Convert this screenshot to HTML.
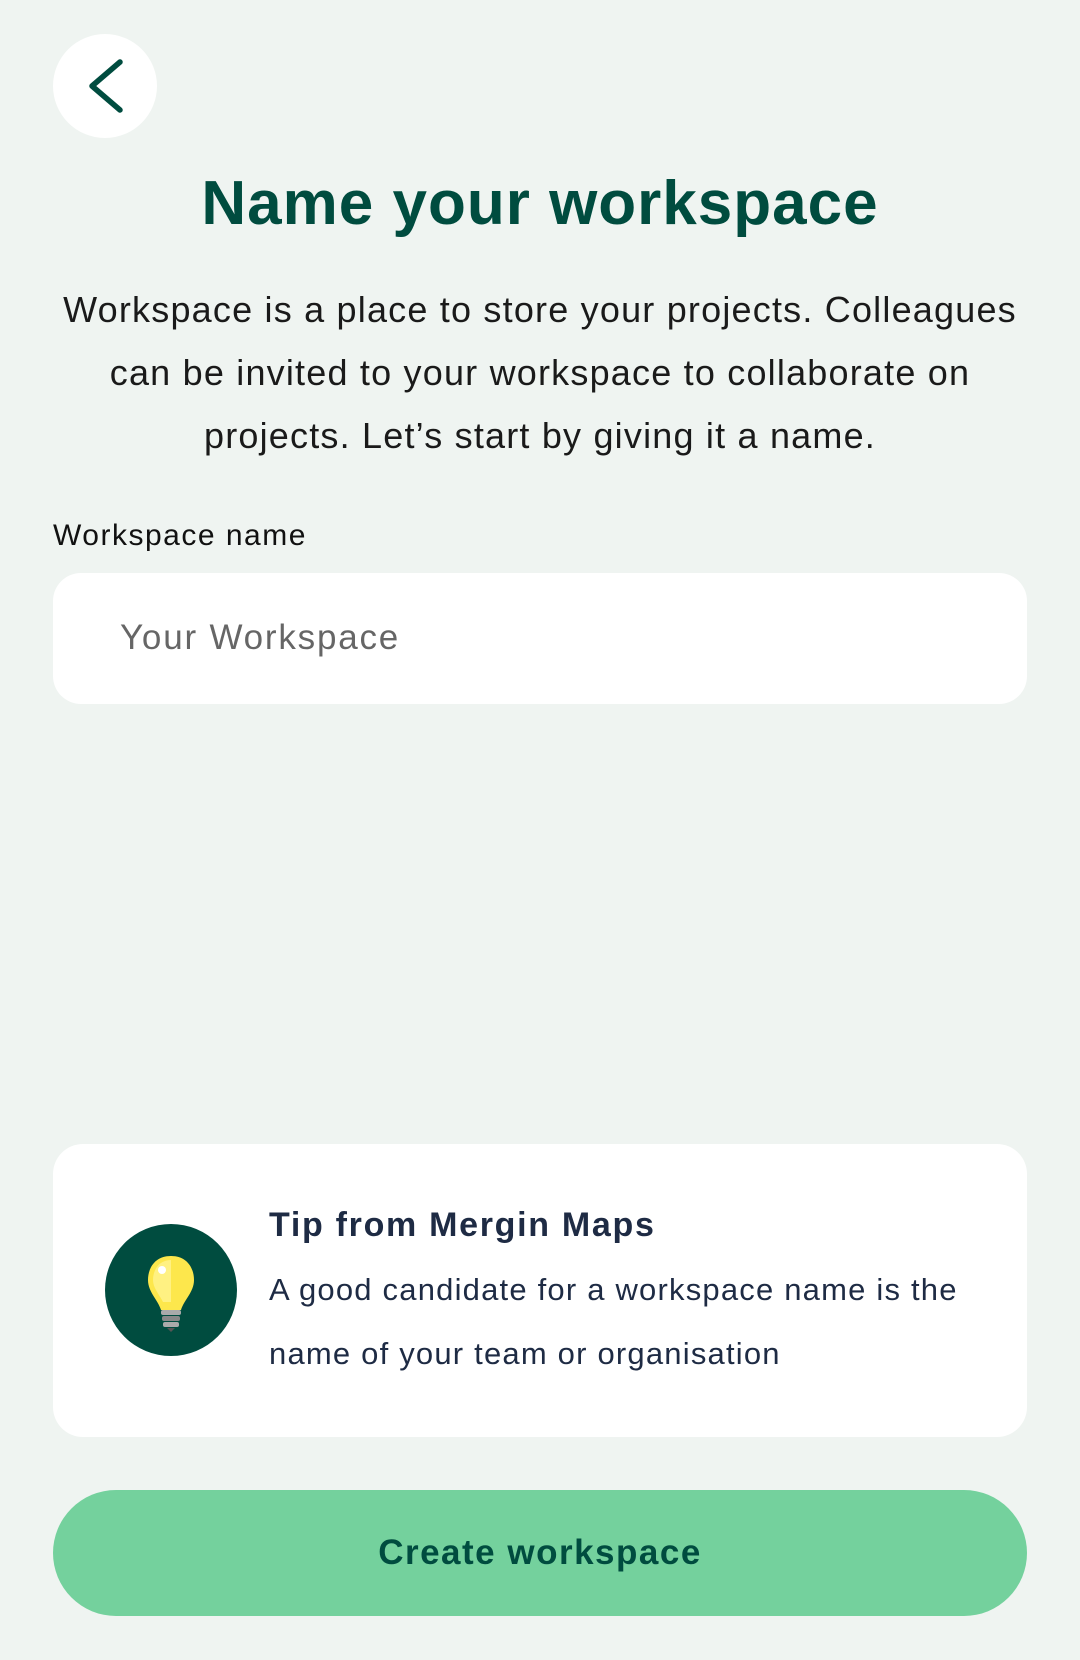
<!DOCTYPE html>
<html><head><meta charset="utf-8"><style>
*{margin:0;padding:0;box-sizing:border-box}
body{width:1080px;height:1660px;background:#eff4f1;font-family:"Liberation Sans",sans-serif;position:relative;overflow:hidden}
.back{position:absolute;left:53px;top:34px;width:104px;height:104px;border-radius:50%;background:#fff}
h1{position:absolute;top:166px;left:0;width:1080px;text-align:center;font-size:62px;font-weight:bold;color:#004c3f;line-height:76px;letter-spacing:1px}
.p{position:absolute;top:278px;left:0;width:1080px;text-align:center;font-size:36px;line-height:63px;color:#1a1a1a;letter-spacing:1.2px}
.lbl{position:absolute;left:53px;top:519px;font-size:30px;color:#111;letter-spacing:1.5px}
.inp{position:absolute;left:53px;top:573px;width:974px;height:131px;background:#fff;border-radius:28px}
.inp span{position:absolute;left:67px;top:44px;font-size:35px;color:#666;line-height:42px;letter-spacing:1.8px}
.card{position:absolute;left:53px;top:1144px;width:974px;height:293px;background:#fff;border-radius:30px}
.bulb{position:absolute;left:105px;top:1224px;width:132px;height:132px;border-radius:50%;background:#004c3f}
.tt{position:absolute;left:269px;top:1206px;font-size:34px;font-weight:bold;color:#1e2b44;letter-spacing:1.7px}
.tb{position:absolute;left:269px;top:1258px;font-size:31px;line-height:64px;color:#1e2b44;width:780px;letter-spacing:1.2px}
.btn{position:absolute;left:53px;top:1490px;width:974px;height:126px;border-radius:63px;background:#74d19d;text-align:center;line-height:126px;font-size:35px;font-weight:bold;color:#004c3f;letter-spacing:1.5px}
</style></head><body>
<div class="back"><svg width="104" height="104" viewBox="0 0 104 104"><path d="M67 28 L39 52 L67 76" fill="none" stroke="#004c3f" stroke-width="5.5" stroke-linecap="round" stroke-linejoin="round"/></svg></div>
<h1>Name your workspace</h1>
<div class="p">Workspace is a place to store your projects. Colleagues<br>can be invited to your workspace to collaborate on<br>projects. Let’s start by giving it a name.</div>
<div class="lbl">Workspace name</div>
<div class="inp"><span>Your Workspace</span></div>
<div class="card"></div>
<div class="bulb"><svg width="132" height="132" viewBox="0 0 132 132">
<path d="M66 32 C50 32 43 44 43 56 C43 68 53 76 56 86 L76 86 C79 76 89 68 89 56 C89 44 82 32 66 32 Z" fill="#fde74c"/>
<path d="M66 36 C54 36 48 46 48 56 C48 64 54 70 58 78 L66 78 Z" fill="#fff59a" opacity=".7"/>
<circle cx="57" cy="46" r="4" fill="#fff"/>
<rect x="56" y="86" width="20" height="5" rx="2" fill="#aaa"/>
<rect x="57" y="92" width="18" height="5" rx="2" fill="#888"/>
<rect x="58" y="98" width="16" height="5" rx="2" fill="#aaa"/>
<path d="M62 104 L70 104 L66 108 Z" fill="#555"/>
</svg></div>
<div class="tt">Tip from Mergin Maps</div>
<div class="tb">A good candidate for a workspace name is the<br>name of your team or organisation</div>
<div class="btn">Create workspace</div>
</body></html>
